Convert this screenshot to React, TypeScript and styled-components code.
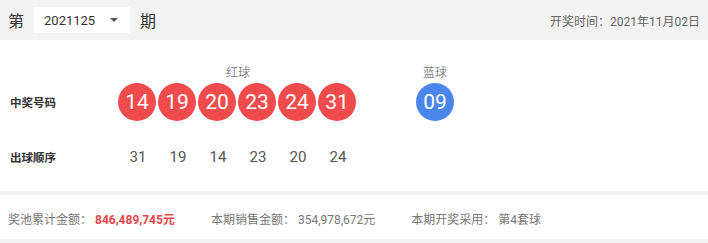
import React from 'react';
import styled, { createGlobalStyle } from 'styled-components';

const GlobalStyle = createGlobalStyle`
  html, body {
    margin: 0;
    padding: 0;
    background: #f3f3f3;
    font-family: Roboto, "Noto Sans CJK SC", sans-serif;
  }
`;

const red = ['14', '19', '20', '23', '24', '31'];
const blue = ['09'];
const order = ['31', '19', '14', '23', '20', '24'];

// -----------------------------------------------------------------------------
// Header
// -----------------------------------------------------------------------------
const Header = styled.div`
  height: 40px;
  display: flex;
  align-items: center;
  padding: 0 8px;
  background: #f3f3f3;
  color: #333;
`;

const Issue = styled.span`
  font-size: 16px;
`;

const Select = styled.div`
  width: 96px;
  height: 26px;
  margin: 0 10px;
  box-sizing: border-box;
  padding: 0 10px;
  display: flex;
  align-items: center;
  justify-content: space-between;
  background: #fff;
  font-size: 13px;
  color: #333;
`;

const Caret = styled.span`
  width: 0;
  height: 0;
  margin-right: 2px;
  border-left: 4px solid transparent;
  border-right: 4px solid transparent;
  border-top: 4px solid #555;
`;

const DrawDate = styled.span`
  margin-left: auto;
  font-size: 12px;
  color: #666;
`;

// -----------------------------------------------------------------------------
// Result
// -----------------------------------------------------------------------------
const Result = styled.div`
  background: #fff;
  padding: 23px 0 0 10px;
  display: grid;
  grid-template-columns: 108px 240px 58px 38px;
  grid-template-rows: 18px 42px 68px;
  align-items: center;
`;

const GroupTitle = styled.div`
  font-size: 12px;
  color: #888;
  text-align: center;
  align-self: start;
`;

const RowLabel = styled.div`
  font-size: 11.5px;
  font-weight: bold;
  color: #333;
`;

const Balls = styled.div`
  display: flex;
  gap: 2px;
`;

const Ball = styled.div<{ $color: string }>`
  width: 38px;
  height: 38px;
  border-radius: 50%;
  background: ${(p) => p.$color};
  color: #fff;
  font-size: 21px;
  display: flex;
  align-items: center;
  justify-content: center;
`;

const Sequence = styled.div`
  display: flex;
`;

const SeqNum = styled.span`
  width: 40px;
  text-align: center;
  font-size: 15px;
  color: #555;
`;

// -----------------------------------------------------------------------------
// Footer
// -----------------------------------------------------------------------------
const Footer = styled.div`
  margin-top: 4px;
  height: 44px;
  background: #fff;
  display: flex;
  align-items: center;
  padding: 2px 0 0 8px;
  box-sizing: border-box;
  font-size: 12px;
  color: #777;
`;

const Stat = styled.span`
  margin-right: 36px;
`;

const Value = styled.span<{ $hot?: boolean }>`
  margin-left: 3px;
  color: ${(p) => (p.$hot ? '#e8484c' : '#777')};
  font-weight: ${(p) => (p.$hot ? 'bold' : 'normal')};
`;

const App = (): JSX.Element => (
  <>
    <GlobalStyle />
    <Header>
      <Issue>第</Issue>
      <Select>
        2021125
        <Caret />
      </Select>
      <Issue>期</Issue>
      <DrawDate>开奖时间：2021年11月02日</DrawDate>
    </Header>
    <Result>
      <span />
      <GroupTitle>红球</GroupTitle>
      <span />
      <GroupTitle>蓝球</GroupTitle>

      <RowLabel>中奖号码</RowLabel>
      <Balls>
        {red.map((n) => (
          <Ball key={n} $color="#f04b4d">{n}</Ball>
        ))}
      </Balls>
      <span />
      <Balls>
        {blue.map((n) => (
          <Ball key={n} $color="#4a86ec">{n}</Ball>
        ))}
      </Balls>

      <RowLabel>出球顺序</RowLabel>
      <Sequence>
        {order.map((n, i) => (
          <SeqNum key={i}>{n}</SeqNum>
        ))}
      </Sequence>
    </Result>
    <Footer>
      <Stat>
        奖池累计金额：<Value $hot>846,489,745元</Value>
      </Stat>
      <Stat>
        本期销售金额：<Value>354,978,672元</Value>
      </Stat>
      <Stat>
        本期开奖采用：<Value>第4套球</Value>
      </Stat>
    </Footer>
  </>
);

export default App;
